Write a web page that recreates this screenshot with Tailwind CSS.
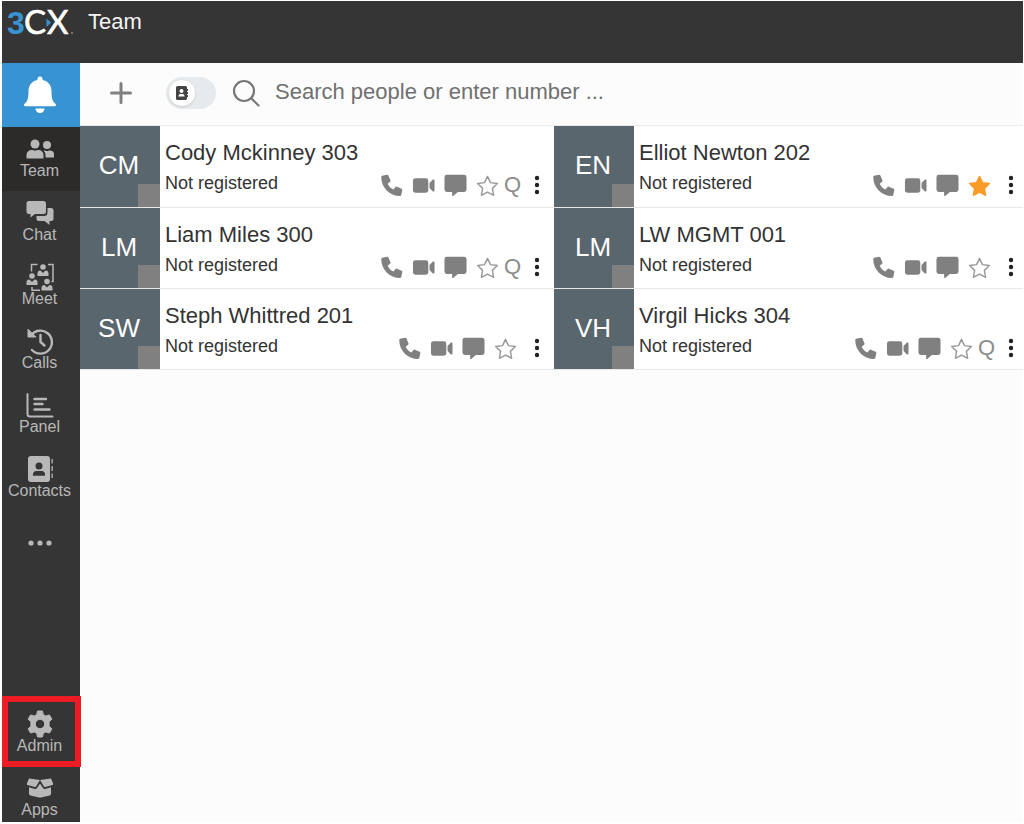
<!DOCTYPE html>
<html lang="en">
<head>
<meta charset="utf-8">
<meta name="viewport" content="width=device-width, initial-scale=1">
<title>3CX Team</title>
<script src="https://cdn.jsdelivr.net/npm/@tailwindcss/browser@4"></script>
</head>
<body class="flex min-h-screen flex-col bg-white pt-px pr-px pb-0.5 pl-0.5 font-['Liberation_Sans',Arial,sans-serif] text-[#333]">

<svg class="hidden" aria-hidden="true">
  <symbol id="phone" viewBox="0 0 24 24"><path d="M2.2 1.9 7.4.8c.5-.1 1 .2 1.2.6l2.300 5.200c.2.5.1 1-.3 1.400L8 10.200c1.300 2.700 3.300 4.700 6 6l2.200-2.700c.3-.4.9-.5 1.400-.3l5 2.300c.5.2.8.7.7 1.200l-1.100 5.300c-.1.500-.6.900-1.100.9C9.900 22.900 1.200 13.900 1.300 3c0-.5.4-1 .9-1.100Z"/></symbol>
  <symbol id="video" viewBox="0 0 24 24"><rect x="1" y="4.500" width="16" height="15" rx="2.500"/><path d="M18.300 9.500 21.500 6c.8-.7 2-.3 2 .7v10.600c0 1-1.200 1.400-2 .7l-3.200-3.500Z"/></symbol>
  <symbol id="message" viewBox="0 0 24 24"><path d="M3 .8h18A2.500 2.500 0 0 1 23.500 3.300v13a2.500 2.500 0 0 1-2.500 2.500h-6.500L9.500 22.900c-.5.400-1 .1-1-.5v-3.600H3a2.500 2.500 0 0 1-2.500-2.500v-13A2.500 2.500 0 0 1 3 .8Z"/></symbol>
  <symbol id="star" viewBox="0 0 24 24"><path d="m12 2.500 3.100 6.500 7.200 1-5.200 5 1.300 7.200L12 18.800l-6.400 3.400L6.900 15 1.700 10l7.200-1Z" stroke-linejoin="round"/></symbol>
  <symbol id="more" viewBox="0 0 6 20"><circle cx="3" cy="3" r="2.200"/><circle cx="3" cy="10" r="2.200"/><circle cx="3" cy="17" r="2.200"/></symbol>
</svg>

<header class="flex h-[62px] shrink-0 items-start gap-[10px] bg-[#353535] pl-1">
  <svg class="h-12 w-[72px]" viewBox="0 0 72 48" role="img" aria-label="3CX">
    <text x="1" y="33" font-family="Liberation Sans" font-weight="700" font-size="32" fill="#3793d1">3</text>
    <text x="18" y="33" font-family="Lato" font-size="33" fill="#fff" stroke="#fff" stroke-width=".6">C</text>
    <text x="41" y="33" font-family="Lato" font-size="33" fill="#fff" stroke="#fff" stroke-width=".6">X</text>
    <path d="M40.500 17.500 45 21.500l-4.500 4.500Z" fill="#3793d1"/>
    <circle cx="66" cy="32" r="1" fill="#888"/>
  </svg>
  <h1 class="pt-[7px] text-[22px] leading-7 text-[#f4f4f4]">Team</h1>
</header>

<div class="flex flex-1">
  <nav class="flex w-[78px] shrink-0 flex-col bg-[#353535] text-base leading-4 text-[#b8b8b8]" aria-label="Main">
    <button class="flex h-16 items-center justify-center bg-[#3793d1] pr-[3px] text-white" aria-label="Notifications">
      <svg class="h-10 w-9" viewBox="0 0 36 40" fill="currentColor"><path d="M18 1.500a2.500 2.500 0 0 1 2.500 2.500v1C26 6 29.500 10.500 29.500 16c0 8.500 1.500 10.500 3.700 12.500 1.500 1.400.8 2.800-1 2.800H3.800c-1.800 0-2.500-1.400-1-2.800 2.200-2 3.700-4 3.700-12.500C6.500 10.500 10 6 15.500 5v-1A2.500 2.500 0 0 1 18 1.500Z"/><path d="M13.500 33.500h9a4.500 4.500 0 0 1-9 0Z"/></svg>
    </button>
    <a href="#team" class="flex h-16 flex-col items-center bg-[#2c2b2a] pt-2 pr-[3px]" aria-current="page">
      <svg class="size-7" viewBox="0 0 28 28" fill="currentColor"><circle cx="9" cy="9" r="4.500"/><path d="M.500 23.500v-3.500a5 5 0 0 1 5-5c1.500 0 2 .7 3.500.7s2-.7 3.500-.7a5 5 0 0 1 5 5v3.500Z"/><circle cx="21" cy="10" r="4"/><path d="M18 15.500c1.500 0 2 .5 3 .5s1.500-.5 3-.5a4 4 0 0 1 4 4v3h-8.500v-2.500a6 6 0 0 0-1.800-4.300Z"/></svg>
      Team</a>
    <a href="#chat" class="flex h-16 flex-col items-center pt-2 pr-[3px]">
      <svg class="size-7" viewBox="0 0 28 28" fill="currentColor"><path d="M3 2h14.500a2.500 2.500 0 0 1 2.500 2.500v8a2.500 2.500 0 0 1-2.500 2.500H9l-4.500 3.500V15H3a2.500 2.500 0 0 1-2.500-2.500v-8A2.500 2.500 0 0 1 3 2Z"/><path d="M21.500 9H25a2.500 2.500 0 0 1 2.500 2.500v8A2.500 2.500 0 0 1 25 22h-1.500v4L18.500 22H13a2.500 2.500 0 0 1-2.500-2.500V17H18a3.500 3.500 0 0 0 3.500-3.500Z"/></svg>
      Chat</a>
    <a href="#meet" class="flex h-16 flex-col items-center pt-2 pr-[3px]">
      <svg class="size-7" viewBox="0 0 28 28" fill="currentColor"><g id="person"><circle cx="6" cy="13" r="2.800"/><path d="M.500 22v-2.500c0-2 1-3 3-3L6 19l2.500-2.500c2 0 3 1 3 3V22Z"/></g><use href="#person" x="11" y="-9"/><use href="#person" x="15" y="5.500"/><path d="M5.500 8.500V1.500h6M22 1.500h5v17h-1.500M6 24v3.200h8" fill="none" stroke="currentColor" stroke-width="1.500"/></svg>
      Meet</a>
    <a href="#calls" class="flex h-16 flex-col items-center pt-2 pr-[3px]">
      <svg class="size-7" viewBox="0 0 28 28" fill="none" stroke="currentColor" stroke-width="2.400" stroke-linecap="round" stroke-linejoin="round"><path d="M5 8.500A11.500 11.500 0 1 1 6 23"/><path d="M14.500 8v7l4 3.500"/><path d="M2 2.500V10h7.500Z" fill="currentColor" stroke-width="1"/></svg>
      Calls</a>
    <a href="#panel" class="flex h-16 flex-col items-center pt-2 pr-[3px]">
      <svg class="size-7" viewBox="0 0 28 28" fill="none" stroke="currentColor" stroke-width="2" stroke-linecap="round" stroke-linejoin="round"><path d="M1.500 3v20a2.500 2.500 0 0 0 2.500 2.500h22.500"/><path d="M8.500 8h11.500M8.500 13h8M8.500 18.500h15" stroke-width="2.400"/></svg>
      Panel</a>
    <a href="#contacts" class="flex h-16 flex-col items-center pt-2 pr-[3px]">
      <svg class="size-7" viewBox="0 0 28 28" fill="currentColor"><path fill-rule="evenodd" d="M5 1h16a3 3 0 0 1 3 3v20a3 3 0 0 1-3 3H5a3 3 0 0 1-3-3V4a3 3 0 0 1 3-3Zm8 6.500a3.500 3.500 0 1 0 0 7 3.500 3.500 0 0 0 0-7ZM7 20.800h12v-1.300a3.500 3.500 0 0 0-3.500-3.500h-5A3.500 3.500 0 0 0 7 19.500Z"/><path d="M25.500 4h1.300v4.500h-1.300ZM25.500 11h1.300v5h-1.300ZM25.500 18.500h1.300V23h-1.300Z"/></svg>
      Contacts</a>
    <button class="flex h-16 items-center justify-center pr-[3px]" aria-label="More">
      <svg class="h-2 w-7" viewBox="0 0 28 8" fill="currentColor"><circle cx="5" cy="4" r="2.600"/><circle cx="14" cy="4" r="2.600"/><circle cx="23" cy="4" r="2.600"/></svg>
    </button>
    <a href="#admin" class="relative mt-auto flex h-16 flex-col items-center pt-2 pr-[3px]">
      <span class="absolute -top-1.5 -right-px -bottom-px left-0 border-[6px] border-[#ed1c24]"></span>
      <svg class="size-7" viewBox="0 0 28 28" fill="currentColor"><path fill-rule="evenodd" d="M11.500 1h5l.8 3.700 2.500 1.400 3.600-1.200 2.500 4.300-2.800 2.500v4.600l2.800 2.500-2.500 4.300-3.600-1.200-2.500 1.400-.8 3.700h-5l-.8-3.700-2.500-1.400-3.600 1.200-2.500-4.300 2.800-2.500v-4.600L2.100 9.200l2.500-4.300 3.600 1.200 2.500-1.400ZM14 9.300a4.700 4.700 0 1 0 0 9.400 4.700 4.700 0 0 0 0-9.400Z" stroke="currentColor" stroke-width="1" stroke-linejoin="round"/></svg>
      Admin</a>
    <a href="#apps" class="flex h-14 flex-col items-center pt-2 pr-[3px]">
      <svg class="size-7" viewBox="0 0 28 28" fill="currentColor"><path d="M3 4.500 14 6l-4 6.500c-.3.500-.8.700-1.300.5L1.500 11c-.6-.2-.9-.8-.6-1.400ZM25 4.500 14 6l4 6.500c.3.500.8.700 1.300.5l7.200-2c.6-.2.9-.8.6-1.400Z"/><path d="M14 9.500 17 14c.5.800 1.300 1.100 2.200.9l5.800-1.600v6.500c0 .8-.5 1.500-1.300 1.700l-8.700 2c-.7.200-1.300.2-2 0l-8.700-2A1.800 1.800 0 0 1 3 19.800v-6.500l5.800 1.600c.9.200 1.700-.1 2.200-.9Z"/></svg>
      Apps</a>
  </nav>

  <main class="min-w-0 flex-1 bg-[#fcfcfc]">
    <div class="flex h-[63px] items-center border-b border-[#ececec] pb-0.5 pl-[29px]">
      <button aria-label="Add"><svg class="size-6" viewBox="0 0 24 24" stroke="#808080" stroke-width="3" stroke-linecap="round"><path d="M12 2.500v19M2.500 12h19"/></svg></button>
      <button role="switch" aria-checked="false" aria-label="Show contacts" class="ml-[33px] flex h-8 w-[50px] items-center rounded-full bg-[#e6eaed] pl-[3px]">
        <span class="flex size-[26px] items-center justify-center rounded-full bg-white shadow-sm">
          <svg class="h-[14px] w-3" viewBox="0 0 12 14" fill="#444"><path fill-rule="evenodd" d="M1.500 0h8A1.500 1.500 0 0 1 11 1.500V3h1v2h-1v1h1v2h-1v1h1v2h-1v1.500a1.500 1.500 0 0 1-1.500 1.500h-8A1.500 1.500 0 0 1 0 12.500v-11A1.500 1.500 0 0 1 1.500 0Zm4 3a2 2 0 1 0 0 4 2 2 0 0 0 0-4ZM2.500 10.500h6V10a2 2 0 0 0-2-2h-2a2 2 0 0 0-2 2Z"/></svg>
        </span>
      </button>
      <label for="search" class="ml-4" aria-label="Search"><svg class="size-7" viewBox="0 0 28 28" fill="none" stroke="#777" stroke-width="2.200" stroke-linecap="round"><circle cx="12" cy="12" r="10"/><path d="m19.500 19.500 7 7"/></svg></label>
      <input id="search" type="text" placeholder="Search people or enter number ..." class="ml-[15px] h-10 min-w-0 flex-1 bg-transparent pb-0.5 text-[22px] outline-none placeholder:text-[#707070]">
    </div>

    <ul id="people" class="grid grid-cols-[474fr_469fr] grid-rows-[82px_81px_81px]"></ul>
  </main>
</div>

<template id="card">
  <li class="flex border-b border-[#e8e8e8] bg-white">
    <div class="relative flex w-20 shrink-0 items-center justify-center bg-[#59666d] pr-0.5 pb-0.5 text-[26px] text-white"><span data-initials></span><i class="absolute right-0 bottom-0 h-[23px] w-[22px] bg-[#808080]"></i></div>
    <div class="flex min-w-0 flex-1 flex-col pt-[13px] pl-[5px]">
      <h2 class="text-[22px] leading-7" data-name></h2>
      <div class="flex items-start justify-between">
        <p class="pt-1 text-lg leading-6">Not registered</p>
        <div data-actions class="flex h-[30px] items-center gap-[9px] pt-1.5 pr-[14px] text-[#808080]">
          <button aria-label="Call"><svg class="size-[23px]" fill="currentColor"><use href="#phone"/></svg></button>
          <button aria-label="Video call"><svg class="size-[23px]" fill="currentColor"><use href="#video"/></svg></button>
          <button aria-label="Message"><svg class="size-[23px]" fill="currentColor"><use href="#message"/></svg></button>
          <button aria-label="Favourite"><svg data-star class="size-[23px]" fill="none" stroke="#999" stroke-width="1.500"><use href="#star"/></svg></button>
          <span data-queue class="-mx-1 w-[17px] text-center text-[22px] leading-6 text-[#8c8c8c]">Q</span>
          <button aria-label="More options" class="ml-2"><svg class="h-5 w-1.5" fill="#222"><use href="#more"/></svg></button>
        </div>
      </div>
    </div>
  </li>
</template>

<script>
const people = [
  { initials: "CM", name: "Cody Mckinney 303", queue: true },
  { initials: "EN", name: "Elliot Newton 202", favourite: true },
  { initials: "LM", name: "Liam Miles 300", queue: true },
  { initials: "LM", name: "LW MGMT 001" },
  { initials: "SW", name: "Steph Whittred 201" },
  { initials: "VH", name: "Virgil Hicks 304", queue: true }
];
const list = document.getElementById("people");
people.forEach((p, i) => {
  const card = document.getElementById("card").content.cloneNode(true);
  card.querySelector("[data-initials]").textContent = p.initials;
  card.querySelector("[data-name]").textContent = p.name;
  if (!p.queue) card.querySelector("[data-queue]").remove();
  if (p.favourite) {
    const star = card.querySelector("[data-star]");
    star.setAttribute("fill", "#f99b27");
    star.setAttribute("stroke", "#f99b27");
  }
  if (i % 2) card.querySelector("[data-actions]").classList.replace("pr-[14px]", "pr-[9px]");
  list.append(card);
});
</script>
</body>
</html>
